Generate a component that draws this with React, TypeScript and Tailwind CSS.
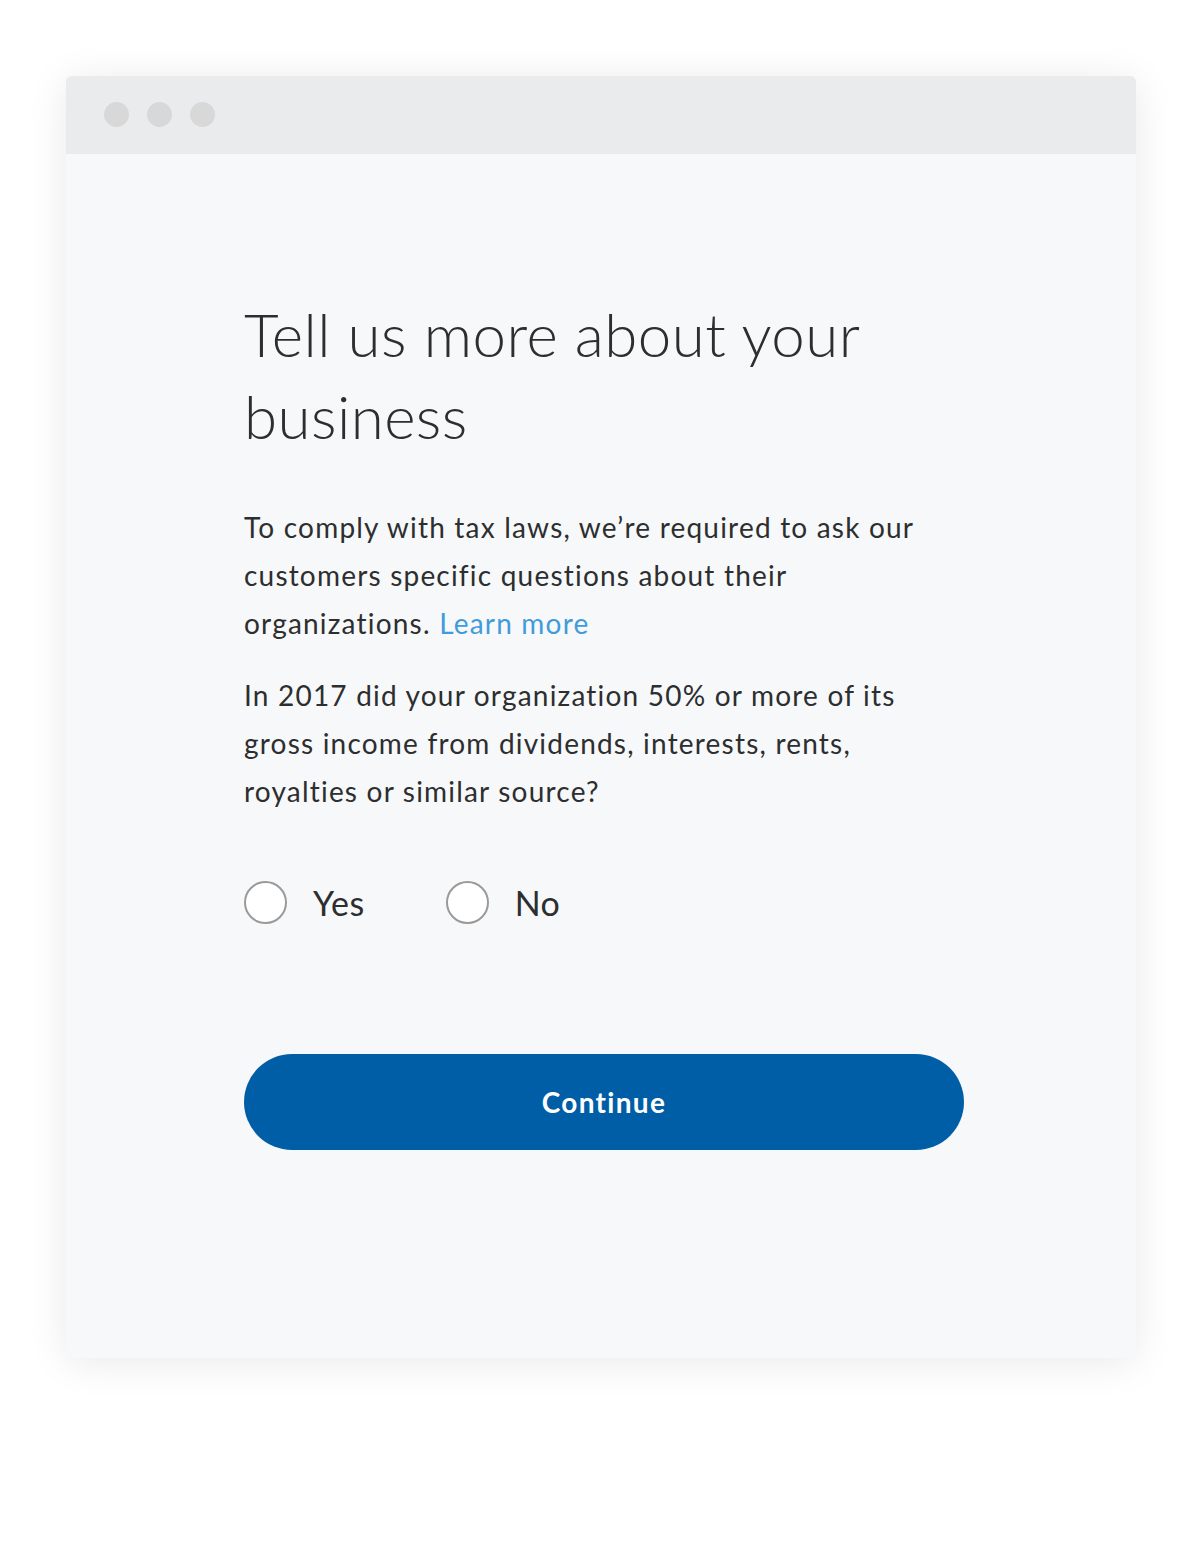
export default function App() {
  return (
    <div className="min-h-[1544px] w-full bg-white pt-[76px]" style={{ fontFamily: 'Lato, "Open Sans", sans-serif' }}>
      {/* Browser window */}
      <div className="ml-[66px] w-[1070px] h-[1282px] rounded-[6px] overflow-hidden bg-[#f7f8fa] shadow-[0_4px_40px_rgba(0,0,0,0.09)]">
        {/* Title bar */}
        <div className="h-[78px] bg-[#eaebed] flex items-center gap-[18px] pl-[38px] pb-[1px]">
          <span className="w-[25px] h-[25px] rounded-full bg-[#d8d8d8]"></span>
          <span className="w-[25px] h-[25px] rounded-full bg-[#d8d8d8]"></span>
          <span className="w-[25px] h-[25px] rounded-full bg-[#d8d8d8]"></span>
        </div>

        {/* Content */}
        <div className="pl-[178px] pt-[139px] w-[898px] text-[#2c2e2f]">
          <h1 className="text-[60px] leading-[82px] font-light tracking-[0.45px]">
            Tell us more about your
            <br />
            business
          </h1>

          <p className="mt-[46px] text-[28px] leading-[48px] tracking-[1.2px]">
            To comply with tax laws, we’re required to ask our
            <br />
            customers specific questions about their
            <br />
            organizations. <a className="text-[#419bdb]">Learn more</a>
          </p>

          <p className="mt-[24px] text-[28px] leading-[48px] tracking-[1.2px]">
            In 2017 did your organization 50% or more of its
            <br />
            gross income from dividends, interests, rents,
            <br />
            royalties or similar source?
          </p>

          {/* Radios */}
          <div className="mt-[66px] flex items-center">
            <label className="flex items-center">
              <span className="w-[43px] h-[43px] rounded-full border-2 border-[#9a9a9a] bg-white"></span>
              <span className="ml-[26px] text-[34px] leading-[43px] tracking-[0.5px]">Yes</span>
            </label>
            <label className="flex items-center ml-[81px]">
              <span className="w-[43px] h-[43px] rounded-full border-2 border-[#9a9a9a] bg-white"></span>
              <span className="ml-[26px] text-[34px] leading-[43px] tracking-[0.5px]">No</span>
            </label>
          </div>

          {/* Button */}
          <button className="mt-[130px] w-[720px] h-[96px] rounded-full bg-[#005ea6] text-white text-[28px] font-bold tracking-[1.3px]">
            Continue
          </button>
        </div>
      </div>
    </div>
  );
}
